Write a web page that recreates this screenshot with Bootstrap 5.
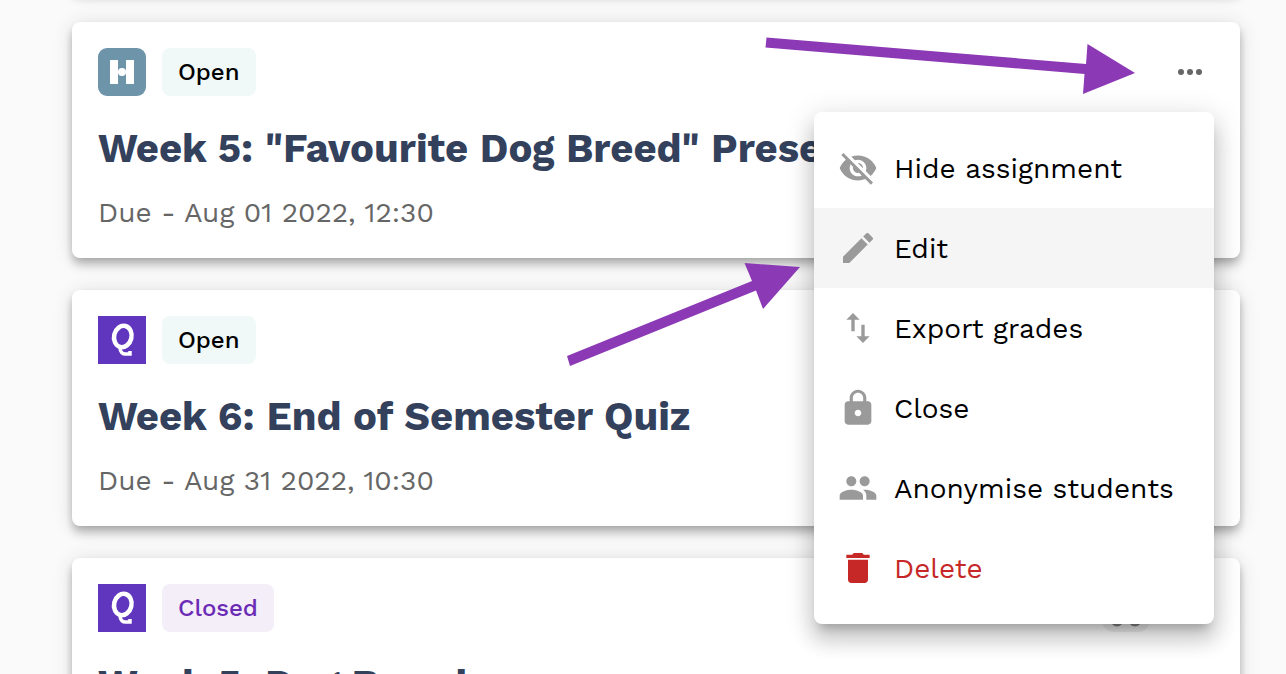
<!DOCTYPE html>
<html lang="en">
<head>
<meta charset="utf-8">
<meta name="viewport" content="width=device-width, initial-scale=1">
<title>Assignments</title>
<link href="https://cdn.jsdelivr.net/npm/bootstrap@5.3.0/dist/css/bootstrap.min.css" rel="stylesheet">
<style>
  body { background: #fafafa; font-family: "Work Sans", Inter, "Liberation Sans", sans-serif; color: #000; }
  .assignments { padding: 0 46px 0 72px; gap: 32px; }
  .task-card { border: 0; border-radius: 8px; padding: 26px; background: #fff;
    box-shadow: 0 4px 8px -2px rgba(0,0,0,.2), 0 8px 10px 0 rgba(0,0,0,.14), 0 2px 20px 0 rgba(0,0,0,.12); }
  .task-card-past { padding: 0; height: 32px; margin-top: -42px; }
  .tool-logo { width: 48px; height: 48px; }
  .status { height: 48px; border-radius: 8px; padding: 0 16px; font-size: 24px; line-height: 48px; font-weight: 500; }
  .status-open { background: #f0f8f8; }
  .status-closed { background: #f4eef9; color: #6b2bb5; }
  .students-chip { width: 48px; height: 48px; border-radius: 12px; background: #f0f0f0; }
  .more-btn { width: 48px; height: 48px; color: #666; }
  .task-title { font-size: 40px; line-height: 58px; font-weight: 700; color: #33415c; margin: 24px 0 16px; }
  .due { font-size: 28px; line-height: 38px; color: #666; }
  .task-menu { display: block; top: 90px; right: 26px; width: 400px; padding: 16px 0; border: 0; border-radius: 8px; z-index: 10;
    box-shadow: 0 10px 10px -6px rgba(0,0,0,.2), 0 16px 20px 2px rgba(0,0,0,.14), 0 6px 28px 4px rgba(0,0,0,.12); }
  .task-menu .dropdown-item { height: 80px; padding: 0 24px; gap: 16px; font-size: 28px; line-height: 43px; color: #000; }
  .task-menu .dropdown-item:hover, .task-menu .is-current { background: #f5f5f5; }
  .task-menu svg { width: 40px; height: 40px; fill: #9a9a9a; flex: none; }
  .task-menu .is-danger, .task-menu .is-danger:hover { color: #c62828; }
  .task-menu .is-danger svg { fill: #c62828; }
  .arrows { top: 0; right: 0; width: 700px; height: 360px; z-index: 11; pointer-events: none; fill: #8c39b5; }
</style>
</head>
<body>
<main class="assignments d-flex flex-column">
  <div class="card task-card task-card-past"></div>

  <article class="card task-card">
    <div class="d-flex align-items-center gap-3">
      <svg class="tool-logo" viewBox="0 0 48 48" aria-hidden="true"><rect width="48" height="48" rx="9" fill="#6d94a9"/><path fill="#fff" d="M12 12h8v24h-8zM28 12h8v24h-8z"/><circle cx="24" cy="24" r="4" fill="#fff"/></svg>
      <span class="status status-open">Open</span>
      <button class="more-btn btn p-0 border-0 ms-auto" type="button" aria-label="More actions" aria-expanded="true"><svg width="48" height="48" viewBox="0 0 48 48" fill="currentColor"><circle cx="15" cy="24" r="3"/><circle cx="24" cy="24" r="3"/><circle cx="33" cy="24" r="3"/></svg></button>
    </div>
    <h2 class="task-title text-truncate">Week 5: "Favourite Dog Breed" Presentation</h2>
    <p class="due mb-0">Due - Aug 01 2022, 12:30</p>

    <div class="dropdown-menu task-menu position-absolute">
      <button class="dropdown-item d-flex align-items-center" type="button"><svg viewBox="0 0 24 24"><path d="M12 7c2.76 0 5 2.24 5 5 0 .65-.13 1.26-.36 1.83l2.92 2.92c1.51-1.26 2.7-2.89 3.43-4.75-1.73-4.39-6-7.5-11-7.5-1.4 0-2.74.25-3.98.7l2.16 2.16C10.74 7.13 11.35 7 12 7zM2 4.27l2.28 2.28.46.46C3.08 8.3 1.78 10.02 1 12c1.73 4.39 6 7.5 11 7.5 1.55 0 3.03-.3 4.38-.84l.42.42L19.73 22 21 20.73 3.27 3 2 4.27zM7.53 9.8l1.55 1.55c-.05.21-.08.43-.08.65 0 1.66 1.34 3 3 3 .22 0 .44-.03.65-.08l1.55 1.55c-.67.33-1.41.53-2.2.53-2.76 0-5-2.24-5-5 0-.79.2-1.53.53-2.2zm4.31-.78l3.15 3.15.02-.16c0-1.66-1.34-3-3-3l-.17.01z"/></svg>Hide assignment</button>
      <button class="dropdown-item is-current d-flex align-items-center" type="button"><svg viewBox="0 0 24 24"><path d="M3 17.25V21h3.75L17.81 9.94l-3.75-3.75L3 17.25zM20.71 7.04c.39-.39.39-1.02 0-1.41l-2.34-2.34c-.39-.39-1.02-.39-1.41 0l-1.83 1.83 3.75 3.75 1.83-1.83z"/></svg>Edit</button>
      <button class="dropdown-item d-flex align-items-center" type="button"><svg viewBox="0 0 24 24"><path d="M16 17.01V10h-2v7.01h-3L15 21l4-3.99h-3zM9 3L5 6.99h3V14h2V6.99h3L9 3z"/></svg>Export grades</button>
      <button class="dropdown-item d-flex align-items-center" type="button"><svg viewBox="0 0 24 24"><path d="M18 8h-1V6c0-2.76-2.24-5-5-5S7 3.24 7 6v2H6c-1.100 0-2 .9-2 2v10c0 1.100.9 2 2 2h12c1.100 0 2-.9 2-2V10c0-1.100-.9-2-2-2zm-6 9c-1.100 0-2-.9-2-2s.9-2 2-2 2 .9 2 2-.9 2-2 2zm3.100-9H8.900V6c0-1.710 1.390-3.100 3.100-3.100 1.710 0 3.100 1.390 3.100 3.100v2z"/></svg>Close</button>
      <button class="dropdown-item d-flex align-items-center" type="button"><svg viewBox="0 0 24 24"><path d="M16 11c1.660 0 2.990-1.340 2.990-3S17.660 5 16 5c-1.660 0-3 1.340-3 3s1.340 3 3 3zm-8 0c1.660 0 2.990-1.340 2.990-3S9.660 5 8 5C6.340 5 5 6.340 5 8s1.340 3 3 3zm0 2c-2.330 0-7 1.170-7 3.500V19h14v-2.500c0-2.330-4.670-3.500-7-3.500zm8 0c-.29 0-.62.02-.97.05 1.160.84 1.970 1.970 1.970 3.450V19h6v-2.500c0-2.330-4.670-3.500-7-3.500z"/></svg>Anonymise students</button>
      <button class="dropdown-item is-danger d-flex align-items-center" type="button"><svg viewBox="0 0 24 24"><path d="M6 19c0 1.100.9 2 2 2h8c1.100 0 2-.9 2-2V7H6v12zM19 4h-3.500l-1-1h-5l-1 1H5v2h14V4z"/></svg>Delete</button>
    </div>

    <svg class="arrows position-absolute" viewBox="540 22 700 360" aria-hidden="true">
      <path d="M766.500 37.500L1086 64L1087.500 44L1135 73L1083 94L1084.500 74L765.500 47.500z"/>
      <path d="M567 356L752 281L744.500 263L800 267L763 309L756 290.500L570 366z"/>
    </svg>
  </article>

  <article class="card task-card">
    <div class="d-flex align-items-center gap-3">
      <svg class="tool-logo" viewBox="0 0 48 48" aria-hidden="true"><rect width="48" height="48" fill="#6036be"/><g fill="none" stroke="#fff" stroke-width="4.500"><ellipse cx="24.800" cy="20.500" rx="8.700" ry="10.800" transform="rotate(14 24.800 20.500)"/><path d="M22 31.500c0 5 3 6.500 5.500 6.500h4.500v-3" stroke-width="3.500"/></g></svg>
      <span class="status status-open">Open</span>
    </div>
    <h2 class="task-title text-truncate">Week 6: End of Semester Quiz</h2>
    <p class="due mb-0">Due - Aug 31 2022, 10:30</p>
  </article>

  <article class="card task-card">
    <div class="d-flex align-items-center gap-3">
      <svg class="tool-logo" viewBox="0 0 48 48" aria-hidden="true"><rect width="48" height="48" fill="#6036be"/><g fill="none" stroke="#fff" stroke-width="4.500"><ellipse cx="24.800" cy="20.500" rx="8.700" ry="10.800" transform="rotate(14 24.800 20.500)"/><path d="M22 31.500c0 5 3 6.500 5.500 6.500h4.500v-3" stroke-width="3.500"/></g></svg>
      <span class="status status-closed">Closed</span>
      <span class="students-chip ms-auto"><svg width="48" height="48" viewBox="0 0 48 48" fill="none" stroke="#888" stroke-width="3" aria-hidden="true"><circle cx="15" cy="36" r="5"/><circle cx="33" cy="36" r="5"/></svg></span>
      <button class="more-btn btn p-0 border-0" type="button" aria-label="More actions"><svg width="48" height="48" viewBox="0 0 48 48" fill="currentColor"><circle cx="15" cy="24" r="3"/><circle cx="24" cy="24" r="3"/><circle cx="33" cy="24" r="3"/></svg></button>
    </div>
    <h2 class="task-title text-truncate">Week 5: Dog Breed</h2>
    <p class="due mb-0">Due - Jul 31 2022, 10:30</p>
  </article>
</main>
<script src="https://cdn.jsdelivr.net/npm/bootstrap@5.3.0/dist/js/bootstrap.bundle.min.js"></script>
</body>
</html>
